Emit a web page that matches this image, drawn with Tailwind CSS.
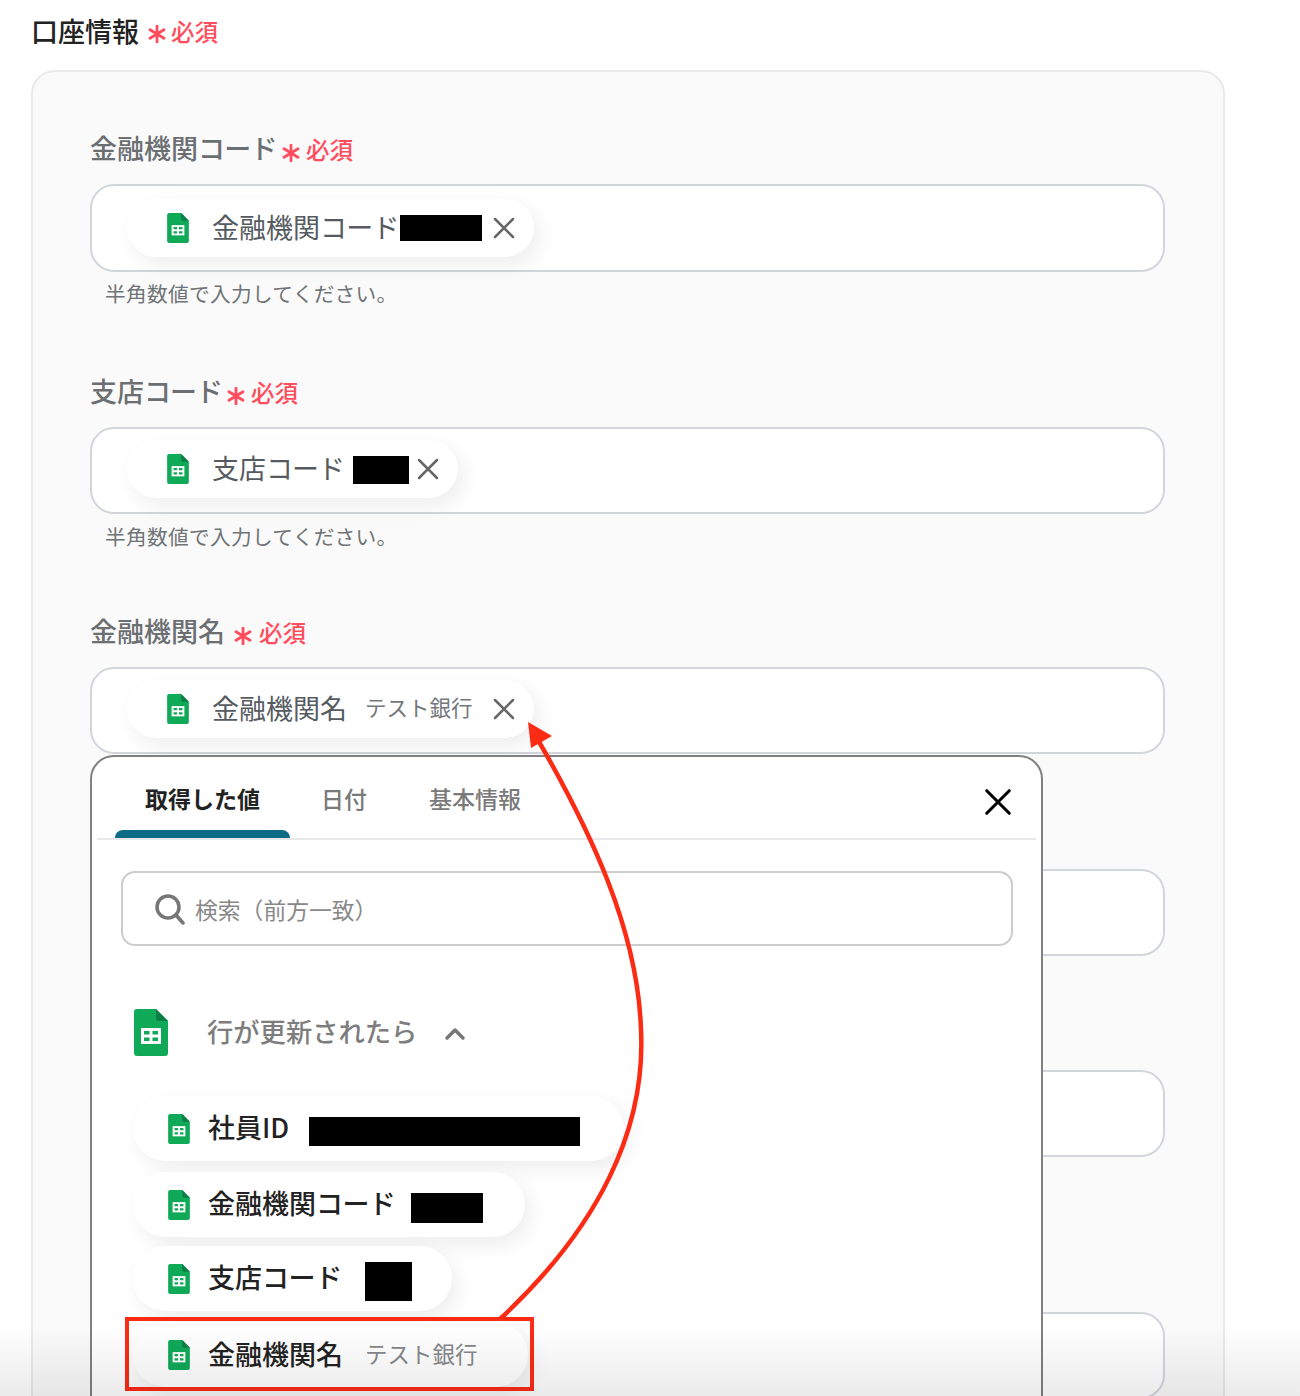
<!DOCTYPE html>
<html lang="ja">
<head>
    <meta charset="UTF-8">
    <title>口座情報</title>
    <script src="https://cdn.jsdelivr.net/npm/@tailwindcss/browser@4"></script>
</head>
<body class="bg-white font-['Noto_Sans_CJK_JP','Noto_Sans',sans-serif]">
<svg class="hidden">
    <symbol id="sheet" viewBox="0 0 34 47">
        <path d="M3 0H22L34 12V44a3 3 0 0 1-3 3H3a3 3 0 0 1-3-3V3a3 3 0 0 1 3-3z" fill="#0fa958"/>
        <path d="M22 0L34 12H25a3 3 0 0 1-3-3z" fill="#0b7f45"/>
        <path d="M7 19H27V35H7z" fill="#fff"/>
        <path d="M10 22H15.5V25.5H10zM18.500 22H24V25.500H18.500zM10 28.500H15.500V32H10zM18.500 28.500H24V32H18.500z" fill="#0fa958"/>
    </symbol>
    <symbol id="star" viewBox="0 0 18 18">
        <path d="M9 1V17M2 4.800L16 13.200M16 4.800L2 13.200" stroke="#ff4d5e" stroke-width="2.800" stroke-linecap="round" fill="none"/>
    </symbol>
    <symbol id="cross" viewBox="0 0 24 24">
        <path d="M3 3L21 21M21 3L3 21" stroke="currentColor" stroke-width="2.500" stroke-linecap="round" fill="none"/>
    </symbol>
</svg>

<div class="relative h-[1396px] w-[1300px] overflow-hidden">
    <!-- section title -->
    <div class="flex h-[70px] items-center pb-[8px] pl-[31px]">
        <span class="w-[109px] text-[27px] leading-[40px] font-medium text-[#222]">口座情報</span>
        <svg class="ml-[8px] mt-[6px] h-[18px] w-[18px]"><use href="#star"/></svg>
        <span class="ml-[5px] text-[23.500px] leading-[40px] font-medium text-[#ff4d5e]">必須</span>
    </div>

    <div class="ml-[31px] h-[1400px] w-[1194px] rounded-[24px] border-2 border-[#e9e9eb] bg-[#fafafa] pl-[57px] pt-[58px]">
        <!-- 金融機関コード -->
        <div class="flex h-[40px] items-center">
            <span class="w-[189px] pb-[4px] text-[27px] leading-[40px] font-medium whitespace-nowrap text-[#6b6f72]">金融機関<span class="tracking-[-0.8px]">コード</span></span>
            <svg class="ml-[3px] mt-[6px] h-[18px] w-[18px]"><use href="#star"/></svg>
            <span class="ml-[6px] pb-[2px] text-[23.500px] leading-[40px] font-medium text-[#ff4d5e]">必須</span>
        </div>
        <div class="mt-[14px] flex h-[88px] w-[1075px] items-start rounded-[24px] border-2 border-[#d2d6dc] bg-white pl-[35px] pt-[13px]">
            <div class="flex h-[58px] w-[407px] items-center rounded-full bg-white pl-[40px] shadow-[6px_8px_20px_rgba(0,0,0,0.07)]">
                <svg class="h-[30px] w-[22px]"><use href="#sheet"/></svg>
                <span class="ml-[23px] w-[188px] pb-[2px] text-[27px] leading-[40px] whitespace-nowrap text-[#555b61]">金融機関<span class="tracking-[-0.8px]">コード</span></span>
                <span class="h-[26px] w-[82px] bg-black"></span>
                <svg class="ml-[10px] h-[24px] w-[24px] text-[#666]"><use href="#cross"/></svg>
            </div>
        </div>
        <p class="mt-[3px] h-[36px] pl-[15px] text-[20.700px] leading-[36px] tracking-[0.3px] text-[#6f7376]">半角数値で入力してください。</p>

        <!-- 支店コード -->
        <div class="mt-[62px] flex h-[40px] items-center">
            <span class="w-[135px] pb-[4px] text-[27px] leading-[40px] font-medium whitespace-nowrap text-[#6b6f72]">支店<span class="tracking-[-1px]">コード</span></span>
            <svg class="ml-[2px] mt-[6px] h-[18px] w-[18px]"><use href="#star"/></svg>
            <span class="ml-[6px] pb-[2px] text-[23.500px] leading-[40px] font-medium text-[#ff4d5e]">必須</span>
        </div>
        <div class="mt-[14px] flex h-[87px] w-[1075px] items-start rounded-[24px] border-2 border-[#d2d6dc] bg-white pl-[35px] pt-[11px]">
            <div class="flex h-[58px] w-[331px] items-center rounded-full bg-white pl-[40px] shadow-[6px_8px_20px_rgba(0,0,0,0.07)]">
                <svg class="h-[30px] w-[22px]"><use href="#sheet"/></svg>
                <span class="ml-[23px] w-[141px] pb-[2px] text-[27px] leading-[40px] whitespace-nowrap text-[#555b61]">支店<span class="tracking-[-1px]">コード</span></span>
                <span class="mt-[2px] h-[28px] w-[56px] bg-black"></span>
                <svg class="ml-[7px] h-[24px] w-[24px] text-[#666]"><use href="#cross"/></svg>
            </div>
        </div>
        <p class="mt-[4px] h-[36px] pl-[15px] text-[20.700px] leading-[36px] tracking-[0.3px] text-[#6f7376]">半角数値で入力してください。</p>

        <!-- 金融機関名 -->
        <div class="mt-[59px] flex h-[40px] items-center">
            <span class="w-[135px] pb-[4px] text-[27px] leading-[40px] font-medium whitespace-nowrap text-[#6b6f72]">金融機関名</span>
            <svg class="ml-[9px] mt-[6px] h-[18px] w-[18px]"><use href="#star"/></svg>
            <span class="ml-[7px] pb-[2px] text-[23.500px] leading-[40px] font-medium text-[#ff4d5e]">必須</span>
        </div>
        <div class="mt-[14px] flex h-[87px] w-[1075px] items-start rounded-[24px] border-2 border-[#d2d6dc] bg-white pl-[35px] pt-[11px]">
            <div class="flex h-[58px] w-[407px] items-center rounded-full bg-white pl-[40px] shadow-[6px_8px_20px_rgba(0,0,0,0.07)]">
                <svg class="h-[30px] w-[22px]"><use href="#sheet"/></svg>
                <span class="ml-[23px] w-[153px] pb-[2px] text-[27px] leading-[40px] whitespace-nowrap text-[#555b61]">金融機関名</span>
                <span class="w-[127px] pb-[5px] text-[21.500px] leading-[40px] whitespace-nowrap text-[#74787b]">テスト銀行</span>
                <svg class="h-[24px] w-[24px] text-[#666]"><use href="#cross"/></svg>
            </div>
        </div>

        <!-- fields behind the dropdown -->
        <div class="mt-[115px] h-[87px] w-[1075px] rounded-[24px] border-2 border-[#d2d6dc] bg-white"></div>
        <div class="mt-[114px] h-[87px] w-[1075px] rounded-[24px] border-2 border-[#d2d6dc] bg-white"></div>
        <div class="mt-[155px] h-[87px] w-[1075px] rounded-[24px] border-2 border-[#d2d6dc] bg-white"></div>
    </div>

    <!-- value picker dropdown -->
    <div class="absolute left-[90px] top-[755px] h-[700px] w-[953px] rounded-t-[24px] border-2 border-[#808080] bg-white px-[5px]">
        <div class="relative flex h-[83px] items-start border-b-2 border-[#e8e8e8] pl-[18px] pt-[21px]">
            <div class="relative h-[60px] w-[175px] text-center">
                <span class="text-[23px] leading-[40px] font-bold text-[#222]">取得した値</span>
                <span class="absolute bottom-0 left-0 h-[8px] w-[175px] rounded-t-[8px] bg-[#0e6b85]"></span>
            </div>
            <span class="ml-[31px] text-[23px] leading-[40px] font-medium text-[#7a7a7a]">日付</span>
            <span class="ml-[62px] text-[23px] leading-[40px] font-medium text-[#7a7a7a]">基本情報</span>
            <svg class="absolute left-[886px] top-[30px] h-[30px] w-[30px] text-black"><use href="#cross"/></svg>
        </div>

        <div class="ml-[24px] mt-[31px] flex h-[75px] w-[892px] items-center rounded-[14px] border-2 border-[#cccccc] pl-[31px]">
            <svg class="h-[32px] w-[32px]" viewBox="0 0 32 32" fill="none" stroke="#777" stroke-width="3.500" stroke-linecap="round"><circle cx="14" cy="14" r="11"/><path d="M22 22L29 30"/></svg>
            <span class="ml-[9px] pt-[3px] text-[22.800px] leading-[40px] text-[#888]">検索（前方一致）</span>
        </div>

        <div class="ml-[37px] mt-[62px] flex h-[48px] items-center">
            <svg class="h-[47px] w-[34px]"><use href="#sheet"/></svg>
            <span class="ml-[39px] pb-[2px] text-[26.300px] leading-[40px] font-medium text-[#7d7d7d]">行が更新されたら</span>
            <svg class="ml-[27px] mt-[4px] h-[14px] w-[22px]" viewBox="0 0 22 14" fill="none" stroke="#777" stroke-width="3.500" stroke-linecap="round" stroke-linejoin="round"><path d="M3 11L11 3L19 11"/></svg>
        </div>

        <div class="ml-[36px] mt-[40px] flex flex-col items-start">
            <div class="flex h-[65px] w-[491px] items-center rounded-full bg-white pl-[35px] shadow-[6px_8px_20px_rgba(0,0,0,0.07)]">
                <svg class="h-[30px] w-[22px]"><use href="#sheet"/></svg>
                <span class="ml-[18px] w-[101px] pb-[4px] text-[27px] leading-[40px] font-medium whitespace-nowrap text-[#222]">社員ID</span>
                <span class="mt-[6px] h-[29px] w-[271px] bg-black"></span>
            </div>
            <div class="mt-[11px] flex h-[65px] w-[392px] items-center rounded-full bg-white pl-[35px] shadow-[6px_8px_20px_rgba(0,0,0,0.07)]">
                <svg class="h-[30px] w-[22px]"><use href="#sheet"/></svg>
                <span class="ml-[18px] w-[203px] pb-[4px] text-[27px] leading-[40px] font-medium whitespace-nowrap text-[#222]">金融機関<span class="tracking-[-0.6px]">コード</span></span>
                <span class="mt-[6px] h-[30px] w-[72px] bg-black"></span>
            </div>
            <div class="mt-[9px] flex h-[65px] w-[319px] items-center rounded-full bg-white pl-[35px] shadow-[6px_8px_20px_rgba(0,0,0,0.07)]">
                <svg class="h-[30px] w-[22px]"><use href="#sheet"/></svg>
                <span class="ml-[18px] w-[157px] pb-[4px] text-[27px] leading-[40px] font-medium whitespace-nowrap text-[#222]">支店<span class="tracking-[-0.4px]">コード</span></span>
                <span class="mt-[6px] h-[39px] w-[47px] bg-black"></span>
            </div>
            <div class="mt-[11px] flex h-[65px] w-[395px] items-center rounded-full bg-white pl-[35px] shadow-[6px_8px_20px_rgba(0,0,0,0.07)]">
                <svg class="h-[30px] w-[22px]"><use href="#sheet"/></svg>
                <span class="ml-[18px] w-[157px] pb-[1px] text-[27px] leading-[40px] font-medium whitespace-nowrap text-[#222]">金融機関名</span>
                <span class="pb-[4px] text-[22.500px] leading-[40px] whitespace-nowrap text-[#85888a]">テスト銀行</span>
            </div>
        </div>
    </div>

    <!-- red annotation: arrow and highlight box -->
    <svg class="pointer-events-none absolute left-0 top-0 h-[1396px] w-[1300px]" viewBox="0 0 1300 1396" fill="none">
        <path d="M500 1319C598 1228 646 1130 641 1030C638 930 590 830 538 740" stroke="#fb2b14" stroke-width="4.500"/>
        <path d="M528 722L552 736L531 748z" fill="#fb2b14"/>
    </svg>
    <div class="pointer-events-none absolute left-[125px] top-[1317px] h-[74px] w-[409px] border-4 border-[#fb2b14]"></div>

    <!-- fade at the bottom edge -->
    <div class="pointer-events-none absolute bottom-0 left-0 h-[70px] w-full bg-gradient-to-b from-black/0 to-black/8"></div>
</div>
</body>
</html>
